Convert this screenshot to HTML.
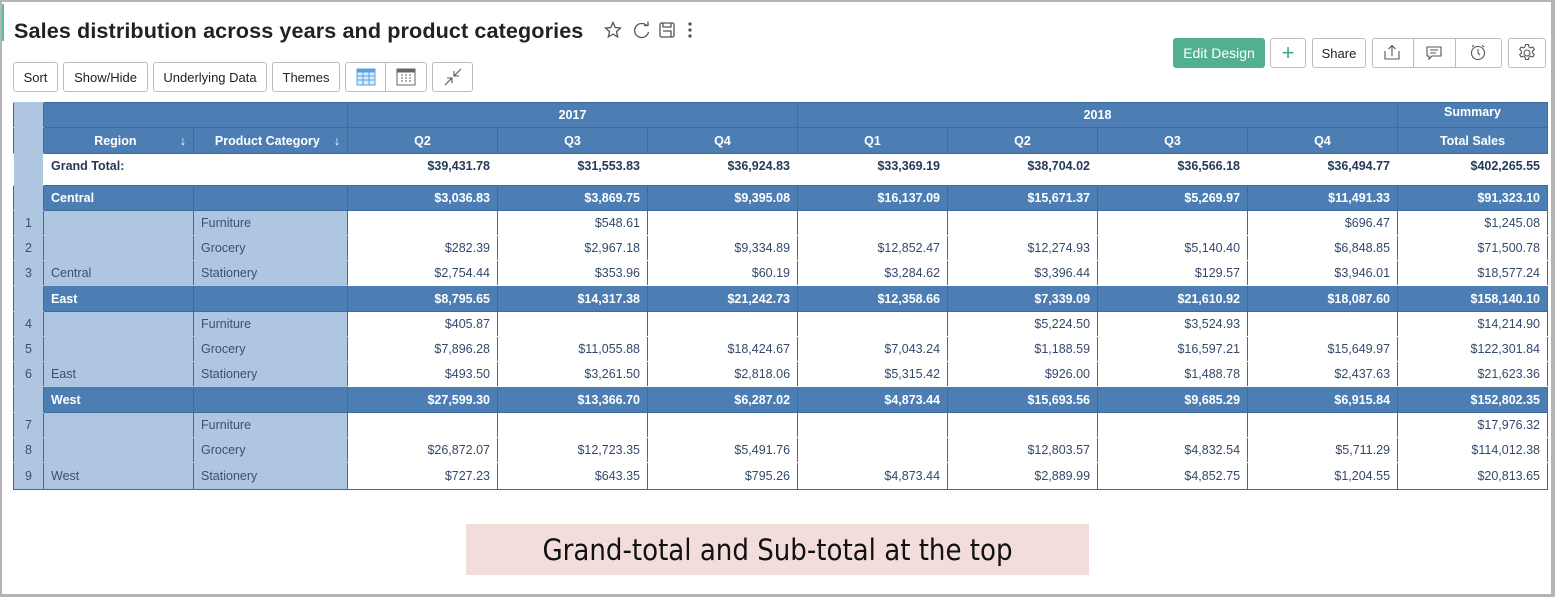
<!DOCTYPE html>
<html><head><meta charset="utf-8"><style>
*{box-sizing:border-box;margin:0;padding:0}
body{width:1555px;height:597px;background:#fff;font-family:"Liberation Sans",sans-serif;position:relative;overflow:hidden;color:#2f4560}
.frame{position:absolute;left:0;top:0;width:1555px;height:597px;border:2px solid #b4b4b4;border-right-width:4px;border-bottom-width:3px}
.green{position:absolute;left:2px;top:4px;width:2px;height:37px;background:#5bbf9a}
h1{position:absolute;left:14px;top:18px;font-size:21.6px;font-weight:bold;color:#222;letter-spacing:0.1px}
.btn{position:absolute;height:30px;border:1px solid #bdbdbd;border-radius:3px;background:#fff;font-size:13px;color:#222;display:flex;align-items:center;justify-content:center}
table{position:absolute;left:13px;top:102px;border-collapse:collapse;table-layout:fixed;width:1535px;font-size:12.5px}
td{border:1px solid #3f6b9c;padding:0 7px;white-space:nowrap;overflow:hidden}
.h td{background:#4d7eb3;color:#fff;font-weight:bold;text-align:center}
.g td{background:#fff;font-weight:bold;text-align:right;color:#243a58;border-left-color:#fff;border-right-color:#fff}
.s td{background:#4d7eb3;color:#fff;font-weight:bold;text-align:right}
.r td{background:#fff;text-align:right;border-top-color:#fff;border-bottom-color:#fff;color:#34496a}
td.lb{background:#afc6e0!important;text-align:left!important;color:#3b5070;font-weight:normal;border-top-color:#afc6e0;border-bottom-color:#afc6e0}
td.num{background:#afc6e0!important;text-align:center!important;color:#3b5070;font-weight:normal;padding:0;border-top-color:#afc6e0!important;border-bottom-color:#afc6e0!important;border-right:1px dotted #5a7fa8}
td.L{text-align:left!important}
.cap{position:absolute;left:466px;top:524px;width:623px;height:51px;background:#f3dddb;font-family:"DejaVu Sans Condensed","DejaVu Sans",sans-serif;font-stretch:condensed;font-size:29px;color:#111;display:flex;align-items:center;justify-content:center;transform:scaleY(1)}
</style></head><body>
<div class="frame"></div><div class="green"></div>
<h1>Sales distribution across years and product categories</h1>
<svg style="position:absolute;left:603px;top:20px" width="100" height="22" viewBox="0 0 100 22" fill="none" stroke="#555" stroke-width="1.3">
<path d="M10 2.5l2.2 5 5.3.5-4 3.6 1.2 5.3-4.7-2.8-4.7 2.8 1.2-5.3-4-3.6 5.3-.5z"/>
<path d="M44 6a7 7 0 1 0 1.5 6"/><path d="M41 5.5h4v-4"/>
<rect x="57" y="3" width="14" height="14" rx="1.5"/><path d="M60 3v4h8V3M60 11h8v6"/>
<circle cx="87" cy="4" r="1" fill="#555"/><circle cx="87" cy="10" r="1" fill="#555"/><circle cx="87" cy="16" r="1" fill="#555"/>
</svg>
<div class="btn" style="left:1173px;top:38px;width:92px;background:#52b08f;border-color:#52b08f;color:#fff;font-size:14px">Edit Design</div>
<div class="btn" style="left:1270px;top:38px;width:36px;color:#3aaa85;font-size:22px;font-weight:300">+</div>
<div class="btn" style="left:1312px;top:38px;width:54px">Share</div>
<div class="btn" style="left:1372px;top:38px;width:130px;display:block"></div>
<svg style="position:absolute;left:1372px;top:38px" width="130" height="30" fill="none" stroke="#555" stroke-width="1.1">
<line x1="41.5" y1="0" x2="41.5" y2="30" stroke="#bdbdbd"/><line x1="83.5" y1="0" x2="83.5" y2="30" stroke="#bdbdbd"/>
<path d="M13 13v8h14v-8M20 18V8M16.5 11l3.5-3.5 3.5 3.5"/>
<path d="M55 9h14v9h-9l-3 3v-3h-2z"/><path d="M58 12h8M58 15h6"/>
<circle cx="106" cy="15" r="6.5"/><path d="M106 11v4l2 2M100 9l2-2M112 9l-2-2"/>
</svg>
<div class="btn" style="left:1508px;top:38px;width:38px"><svg width="20" height="20" viewBox="0 0 20 20" fill="none" stroke="#555" stroke-width="1.1"><circle cx="10" cy="10" r="3"/><path d="M8.6 1.5h2.8l.5 2.3 1.8 1 2.2-.8 1.4 2.4-1.7 1.6v2l1.7 1.6-1.4 2.4-2.2-.8-1.8 1-.5 2.3H8.6l-.5-2.3-1.8-1-2.2.8-1.4-2.4 1.7-1.6v-2L2.7 6.4l1.4-2.4 2.2.8 1.8-1z"/></svg></div>
<div class="btn" style="left:13px;top:62px;width:45px">Sort</div>
<div class="btn" style="left:63px;top:62px;width:85px">Show/Hide</div>
<div class="btn" style="left:153px;top:62px;width:114px">Underlying Data</div>
<div class="btn" style="left:272px;top:62px;width:68px">Themes</div>
<div class="btn" style="left:345px;top:62px;width:82px;display:block"></div>
<svg style="position:absolute;left:345px;top:62px" width="82" height="30" fill="none" stroke-width="1">
<line x1="40.5" y1="0" x2="40.5" y2="30" stroke="#bdbdbd"/>
<rect x="12" y="7" width="18" height="16" stroke="#5aa0e0" fill="#dcebfa"/><rect x="12" y="7" width="18" height="3" fill="#5aa0e0" stroke="#5aa0e0"/>
<path d="M12 14h18M12 18h18M18 10v13M24 10v13" stroke="#5aa0e0"/>
<rect x="52" y="7" width="18" height="16" stroke="#666"/><rect x="52" y="7" width="18" height="3" fill="#666" stroke="#666"/>
<path d="M56 13h2M60 13h2M64 13h2M56 16h2M60 16h2M64 16h2M56 19h2M60 19h2M64 19h2" stroke="#666"/>
</svg>
<div class="btn" style="left:432px;top:62px;width:41px"><svg width="20" height="20" fill="none" stroke="#555" stroke-width="1.1"><path d="M18 2L11 9M11 4v5h5M2 18l7-7M4 11h5v5"/></svg></div>

<table>
<colgroup><col style="width:30px"><col style="width:150px"><col style="width:154px"><col span="8" style="width:150px"></colgroup>
<tr class="h" style="height:25px"><td class="num" style="border-bottom-color:#afc6e0"></td><td colspan="2"></td><td colspan="3">2017</td><td colspan="4">2018</td><td style="vertical-align:top;padding-top:2px">Summary</td></tr>
<tr class="h" style="height:26px"><td class="num"></td><td>Region<span style="float:right">↓</span></td><td>Product Category <span style="float:right">↓</span></td><td>Q2</td><td>Q3</td><td>Q4</td><td>Q1</td><td>Q2</td><td>Q3</td><td>Q4</td><td>Total Sales</td></tr>
<tr class="g" style="height:32px"><td class="num"></td><td class="L" style="background:#fff!important;color:#243a58;font-weight:bold;vertical-align:top;padding-top:5px">Grand Total:</td><td style="background:#fff"></td><td style="vertical-align:top;padding-top:5px">$39,431.78</td><td style="vertical-align:top;padding-top:5px">$31,553.83</td><td style="vertical-align:top;padding-top:5px">$36,924.83</td><td style="vertical-align:top;padding-top:5px">$33,369.19</td><td style="vertical-align:top;padding-top:5px">$38,704.02</td><td style="vertical-align:top;padding-top:5px">$36,566.18</td><td style="vertical-align:top;padding-top:5px">$36,494.77</td><td style="vertical-align:top;padding-top:5px;border-left-color:#3f6b9c">$402,265.55</td></tr>
<tr class="s" style="height:25px"><td class="num"></td><td class="L">Central</td><td></td><td>$3,036.83</td><td>$3,869.75</td><td>$9,395.08</td><td>$16,137.09</td><td>$15,671.37</td><td>$5,269.97</td><td>$11,491.33</td><td>$91,323.10</td></tr>
<tr class="r" style="height:25px"><td class="num">1</td><td class="lb"></td><td class="lb">Furniture</td><td></td><td>$548.61</td><td></td><td></td><td></td><td></td><td>$696.47</td><td>$1,245.08</td></tr>
<tr class="r" style="height:25px"><td class="num">2</td><td class="lb"></td><td class="lb">Grocery</td><td>$282.39</td><td>$2,967.18</td><td>$9,334.89</td><td>$12,852.47</td><td>$12,274.93</td><td>$5,140.40</td><td>$6,848.85</td><td>$71,500.78</td></tr>
<tr class="r" style="height:25px"><td class="num">3</td><td class="lb">Central</td><td class="lb">Stationery</td><td>$2,754.44</td><td>$353.96</td><td>$60.19</td><td>$3,284.62</td><td>$3,396.44</td><td>$129.57</td><td>$3,946.01</td><td>$18,577.24</td></tr>
<tr class="s" style="height:26px"><td class="num"></td><td class="L">East</td><td></td><td>$8,795.65</td><td>$14,317.38</td><td>$21,242.73</td><td>$12,358.66</td><td>$7,339.09</td><td>$21,610.92</td><td>$18,087.60</td><td>$158,140.10</td></tr>
<tr class="r" style="height:25px"><td class="num">4</td><td class="lb"></td><td class="lb">Furniture</td><td>$405.87</td><td></td><td></td><td></td><td>$5,224.50</td><td>$3,524.93</td><td></td><td>$14,214.90</td></tr>
<tr class="r" style="height:25px"><td class="num">5</td><td class="lb"></td><td class="lb">Grocery</td><td>$7,896.28</td><td>$11,055.88</td><td>$18,424.67</td><td>$7,043.24</td><td>$1,188.59</td><td>$16,597.21</td><td>$15,649.97</td><td>$122,301.84</td></tr>
<tr class="r" style="height:25px"><td class="num">6</td><td class="lb">East</td><td class="lb">Stationery</td><td>$493.50</td><td>$3,261.50</td><td>$2,818.06</td><td>$5,315.42</td><td>$926.00</td><td>$1,488.78</td><td>$2,437.63</td><td>$21,623.36</td></tr>
<tr class="s" style="height:26px"><td class="num"></td><td class="L">West</td><td></td><td>$27,599.30</td><td>$13,366.70</td><td>$6,287.02</td><td>$4,873.44</td><td>$15,693.56</td><td>$9,685.29</td><td>$6,915.84</td><td>$152,802.35</td></tr>
<tr class="r" style="height:25px"><td class="num">7</td><td class="lb"></td><td class="lb">Furniture</td><td></td><td></td><td></td><td></td><td></td><td></td><td></td><td>$17,976.32</td></tr>
<tr class="r" style="height:25px"><td class="num">8</td><td class="lb"></td><td class="lb">Grocery</td><td>$26,872.07</td><td>$12,723.35</td><td>$5,491.76</td><td></td><td>$12,803.57</td><td>$4,832.54</td><td>$5,711.29</td><td>$114,012.38</td></tr>
<tr class="r" style="height:27px"><td class="num" style="border-bottom-color:#3f6b9c!important">9</td><td class="lb" style="border-bottom-color:#3f6b9c">West</td><td class="lb" style="border-bottom-color:#3f6b9c">Stationery</td><td style="border-bottom-color:#3f6b9c">$727.23</td><td style="border-bottom-color:#3f6b9c">$643.35</td><td style="border-bottom-color:#3f6b9c">$795.26</td><td style="border-bottom-color:#3f6b9c">$4,873.44</td><td style="border-bottom-color:#3f6b9c">$2,889.99</td><td style="border-bottom-color:#3f6b9c">$4,852.75</td><td style="border-bottom-color:#3f6b9c">$1,204.55</td><td style="border-bottom-color:#3f6b9c">$20,813.65</td></tr>
</table>
<div class="cap">Grand-total and Sub-total at the top</div>
</body></html>
